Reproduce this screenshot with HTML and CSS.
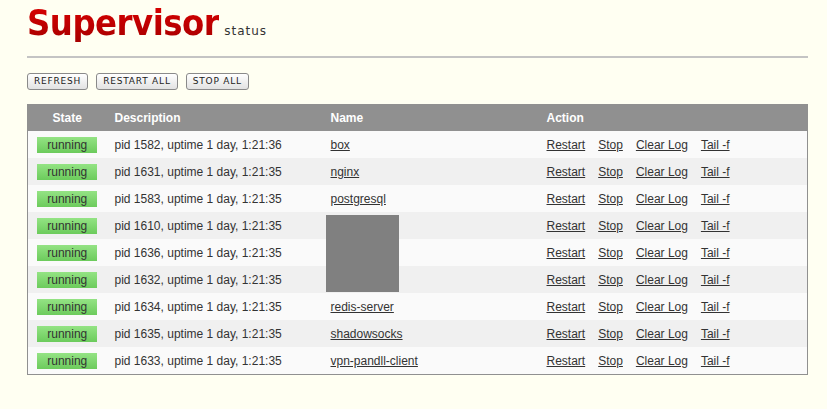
FILE: index.html
```html
<!DOCTYPE html>
<html>
<head>
<meta charset="utf-8">
<title>Supervisor Status</title>
<link rel="stylesheet" href="styles.css">
</head>
<body>
<div class="page">
  <div class="header">
    <h1 class="logo">Supervisor</h1>
    <span class="sub">status</span>
  </div>
  <div class="rule"></div>
  <div class="actions">
    <button class="btn">Refresh</button>
    <button class="btn">Restart All</button>
    <button class="btn">Stop All</button>
  </div>
  <div class="tablewrap">
    <table class="procs">
      <colgroup>
        <col class="c-state"><col class="c-desc"><col class="c-name"><col class="c-act">
      </colgroup>
      <thead>
        <tr><th class="th-state">State</th><th>Description</th><th>Name</th><th>Action</th></tr>
      </thead>
      <tbody>
        <tr><td class="state"><span class="badge">running</span></td><td>pid 1582, uptime 1 day, 1:21:36</td><td><a href="#">box</a></td><td><div class="links"><a href="#">Restart</a><a href="#">Stop</a><a href="#">Clear Log</a><a href="#">Tail -f</a></div></td></tr>
        <tr><td class="state"><span class="badge">running</span></td><td>pid 1631, uptime 1 day, 1:21:35</td><td><a href="#">nginx</a></td><td><div class="links"><a href="#">Restart</a><a href="#">Stop</a><a href="#">Clear Log</a><a href="#">Tail -f</a></div></td></tr>
        <tr><td class="state"><span class="badge">running</span></td><td>pid 1583, uptime 1 day, 1:21:35</td><td><a href="#">postgresql</a></td><td><div class="links"><a href="#">Restart</a><a href="#">Stop</a><a href="#">Clear Log</a><a href="#">Tail -f</a></div></td></tr>
        <tr><td class="state"><span class="badge">running</span></td><td>pid 1610, uptime 1 day, 1:21:35</td><td></td><td><div class="links"><a href="#">Restart</a><a href="#">Stop</a><a href="#">Clear Log</a><a href="#">Tail -f</a></div></td></tr>
        <tr><td class="state"><span class="badge">running</span></td><td>pid 1636, uptime 1 day, 1:21:35</td><td></td><td><div class="links"><a href="#">Restart</a><a href="#">Stop</a><a href="#">Clear Log</a><a href="#">Tail -f</a></div></td></tr>
        <tr><td class="state"><span class="badge">running</span></td><td>pid 1632, uptime 1 day, 1:21:35</td><td></td><td><div class="links"><a href="#">Restart</a><a href="#">Stop</a><a href="#">Clear Log</a><a href="#">Tail -f</a></div></td></tr>
        <tr><td class="state"><span class="badge">running</span></td><td>pid 1634, uptime 1 day, 1:21:35</td><td><a href="#">redis-server</a></td><td><div class="links"><a href="#">Restart</a><a href="#">Stop</a><a href="#">Clear Log</a><a href="#">Tail -f</a></div></td></tr>
        <tr><td class="state"><span class="badge">running</span></td><td>pid 1635, uptime 1 day, 1:21:35</td><td><a href="#">shadowsocks</a></td><td><div class="links"><a href="#">Restart</a><a href="#">Stop</a><a href="#">Clear Log</a><a href="#">Tail -f</a></div></td></tr>
        <tr><td class="state"><span class="badge">running</span></td><td>pid 1633, uptime 1 day, 1:21:35</td><td><a href="#">vpn-pandll-client</a></td><td><div class="links"><a href="#">Restart</a><a href="#">Stop</a><a href="#">Clear Log</a><a href="#">Tail -f</a></div></td></tr>
      </tbody>
    </table>
    <div class="redact"></div>
  </div>
</div>
</body>
</html>
```
FILE: styles.css
```css
html, body {
  margin: 0;
  padding: 0;
  background: #fffff2;
}
.page {
  padding: 0 19px 0 27px;
  width: 781px;
  font-family: "Liberation Sans", Arial, sans-serif;
  color: #333;
}
.header {
  display: flex;
  align-items: baseline;
  height: 48px;
}
.logo {
  margin: 0;
  font-family: "DejaVu Sans Condensed", "DejaVu Sans", sans-serif;
  font-weight: bold;
  font-size: 36px;
  line-height: 45px;
  letter-spacing: -0.5px;
  background: linear-gradient(#d40000 20%, #a80000 90%);
  -webkit-background-clip: text;
  background-clip: text;
  color: transparent;
}
.sub {
  margin-left: 5px;
  font-family: "DejaVu Sans", sans-serif;
  font-size: 12px;
  letter-spacing: 1px;
  color: #333;
}
.rule {
  margin-top: 8px;
  height: 0;
  border-top: 2px solid #c4c4c4;
}
.actions {
  display: flex;
  gap: 8px;
  margin-top: 15px;
}
.btn {
  height: 17px;
  padding: 0 6px;
  border: 1px solid #8a8a8a;
  border-radius: 3px;
  background: linear-gradient(#ffffff, #e2e2e2);
  font-family: "DejaVu Sans", sans-serif;
  font-size: 9px;
  letter-spacing: 0.8px;
  text-transform: uppercase;
  color: #222;
  line-height: 15px;
}
.tablewrap {
  position: relative;
  margin-top: 14px;
}
.procs {
  width: 781px;
  border-collapse: collapse;
  table-layout: fixed;
  border: 1px solid #909090;
  border-top: 0;
  font-size: 12px;
}
.c-state { width: 79px; }
.c-desc { width: 216px; }
.c-name { width: 216px; }
.procs thead tr {
  background: #909090;
}
.procs th {
  height: 27px;
  padding: 0 0 0 8px;
  text-align: left;
  color: #fff;
  font-weight: bold;
  font-size: 12px;
}
.procs th.th-state {
  text-align: center;
  padding: 0;
}
.procs td {
  height: 27px;
  padding: 0 0 0 8px;
  vertical-align: middle;
  white-space: nowrap;
}
.procs tbody tr:nth-child(odd) { background: #fafafa; }
.procs tbody tr:nth-child(even) { background: #f0f0f0; }
.procs td.state {
  padding: 0;
  text-align: center;
}
.badge {
  display: inline-block;
  width: 60px;
  height: 16px;
  line-height: 16px;
  background: linear-gradient(#94e384, #6ccb5c);
  color: #333;
  font-size: 12px;
  vertical-align: middle;
}
.procs a {
  color: #333;
  text-decoration: underline;
}
.links {
  display: flex;
  gap: 13px;
}
.redact {
  position: absolute;
  left: 299px;
  top: 111px;
  width: 73px;
  height: 77px;
  background: #808080;
}
```
